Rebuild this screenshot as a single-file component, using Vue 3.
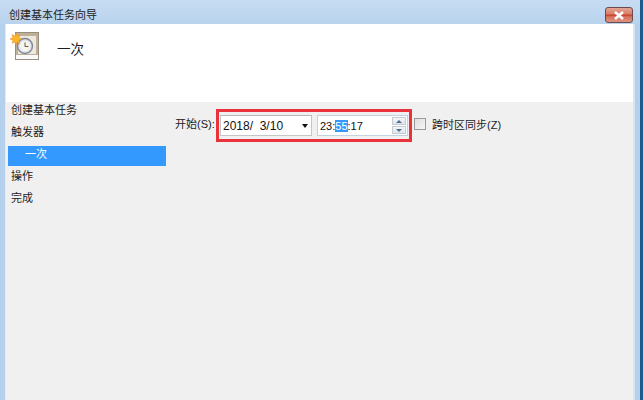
<script setup>
const steps = [
  { label: '创建基本任务' },
  { label: '触发器' },
  { label: '一次', active: true },
  { label: '操作' },
  { label: '完成' },
]
</script>

<template>
  <div class="window">
    <div class="titlebar">
      <span class="title">创建基本任务向导</span>
      <button class="close">
        <svg width="12" height="9" viewBox="0 0 12 9">
          <path d="M2 1 L10 8 M10 1 L2 8" stroke="#fff" stroke-width="2.6" fill="none" />
        </svg>
      </button>
    </div>
    <div class="client">
      <div class="header">
        <svg class="task-icon" width="32" height="32" viewBox="0 0 32 32">
          <rect x="5.5" y="2.5" width="23" height="27" fill="#fbfaf6" stroke="#9a8f7f" />
          <path d="M6 3 H28 V25 H6 Z" fill="#bfb09a" />
          <rect x="8" y="6" width="18" height="18" fill="#efe9dd" />
          <rect x="6" y="25" width="22" height="4" fill="#fafafa" />
          <circle cx="15" cy="16" r="7.5" fill="#dfe3ea" stroke="#7f8794" stroke-width="1.4" />
          <circle cx="15" cy="16" r="5.2" fill="#f6f5ef" />
          <path d="M15 12.5 V16.5 H18.5" stroke="#6a5a3e" stroke-width="1" fill="none" />
          <path d="M6 3 L7 6 L10 4.6 L9 7.6 L12 9 L9 10.3 L10 13.3 L7 12 L6 15 L5 12 L2 13.3 L3 10.3 L0 9 L3 7.6 L2 4.6 L5 6 Z" fill="#fbb62b" stroke="#f08a1c" stroke-width=".5" />
        </svg>
        <span class="heading">一次</span>
      </div>
      <div class="body">
        <ul class="steps">
          <li v-for="step in steps" :key="step.label" :class="{ active: step.active }">{{ step.label }}</li>
        </ul>
        <div class="form">
          <label class="start">开始(S):</label>
          <div class="highlight">
            <div class="field date">
              <span class="value">2018/&nbsp; 3/10</span>
              <i class="caret"></i>
            </div>
            <div class="field time">
              <span class="value">23:<em>55</em>:17</span>
              <div class="spinner">
                <span class="spin"><i class="up"></i></span>
                <span class="spin"><i class="down"></i></span>
              </div>
            </div>
          </div>
          <span class="check"></span>
          <span class="check-label">跨时区同步(Z)</span>
        </div>
      </div>
    </div>
  </div>
</template>

<style>
html, body {
  margin: 0;
  background: #b5d0ec;
}
</style>

<style scoped>
.window {
  width: 643px;
  height: 400px;
  box-sizing: border-box;
  display: flex;
  flex-direction: column;
  background: #b5d0ec;
  border-right: 3px solid #1b5a8c;
  font-family: "Liberation Sans", "Noto Sans CJK SC", sans-serif;
  font-size: 11px;
  color: #1c1c1c;
  overflow: hidden;
}

.titlebar {
  height: 24px;
  flex: none;
  display: flex;
  align-items: flex-start;
  justify-content: space-between;
  padding: 0 7px 0 9px;
  background: linear-gradient(180deg, #c6dcf2, #b9d3ee);
}

.title {
  margin-top: 7px;
  line-height: 16px;
  color: #222;
}

.close {
  width: 28px;
  height: 16px;
  margin: 7px 0 0;
  padding: 0;
  border: 1px solid #6b4a4a;
  border-radius: 3px;
  background: linear-gradient(180deg, #e3a594 0, #d8806c 40%, #c8402c 52%, #d6705c 62%, #dc9484 100%);
  display: flex;
  align-items: center;
  justify-content: center;
}

.client {
  flex: 1;
  margin: 0 5px;
  display: flex;
  flex-direction: column;
  background: #f0f0f0;
  border-left: 1px solid #e2ebf4;
  border-right: 2px solid #d6e6f5;
}

.header {
  height: 78px;
  flex: none;
  display: flex;
  align-items: flex-start;
  background: #fff;
}

.task-icon {
  margin: 6px 0 0 4px;
}

.heading {
  margin: 14px 0 0 15px;
  font-size: 13.5px;
  line-height: 24px;
}

.body {
  flex: 1;
  display: flex;
  align-items: flex-start;
}

.steps {
  width: 158px;
  flex: none;
  margin: 0 0 0 2px;
  padding: 0;
  list-style: none;
}

.steps li {
  height: 22px;
  line-height: 16px;
  padding-left: 3px;
  white-space: nowrap;
}

.steps li.active {
  height: 20px;
  margin-bottom: 2px;
  padding-left: 17px;
  background: #3399ff;
  color: #fff;
}

.form {
  display: flex;
  align-items: center;
  margin: 7px 0 0 9px;
}

.start {
  width: 41px;
  flex: none;
  white-space: nowrap;
  margin-top: -5px;
}

.highlight {
  display: flex;
  gap: 5px;
  padding: 3px 1px;
  border: 3px solid #e8333c;
  background: #f0f0f0;
}

.field {
  height: 21px;
  box-sizing: border-box;
  display: flex;
  align-items: center;
  background: #fff;
  border: 1px solid #c4c6ca;
  border-top-color: #b4b7bc;
  font-size: 12px;
  color: #111;
}

.value {
  padding: 1px 0 0 2px;
  white-space: nowrap;
}

.date {
  width: 92px;
  justify-content: space-between;
}

.caret {
  width: 0;
  height: 0;
  margin-right: 3px;
  border: 3.5px solid transparent;
  border-top: 4px solid #111;
  border-bottom: 0;
}

.time {
  width: 91px;
  justify-content: space-between;
  border-color: #c3d2e2;
  font-size: 11px;
}

.time em {
  font-style: normal;
  background: #3399ff;
  color: #fff;
}

.spinner {
  width: 14px;
  margin-right: 1px;
  display: flex;
  flex-direction: column;
  gap: 1px;
}

.spin {
  height: 8px;
  display: flex;
  align-items: center;
  justify-content: center;
  border: 1px solid #c6ccd4;
  box-sizing: border-box;
  background: linear-gradient(180deg, #f4f6f8, #dfe5ec);
}

.up,
.down {
  width: 0;
  height: 0;
  border: 3px solid transparent;
}

.up {
  border-top: 0;
  border-bottom: 3px solid #4f6f8f;
}

.down {
  border-bottom: 0;
  border-top: 3px solid #4f6f8f;
}

.check {
  width: 10px;
  height: 10px;
  flex: none;
  margin: -3px 0 0 2px;
  border: 1px solid #9a9a9a;
  background: linear-gradient(135deg, #dedede, #f6f6f6);
}

.check-label {
  margin: -3px 0 0 6px;
  white-space: nowrap;
}
</style>
